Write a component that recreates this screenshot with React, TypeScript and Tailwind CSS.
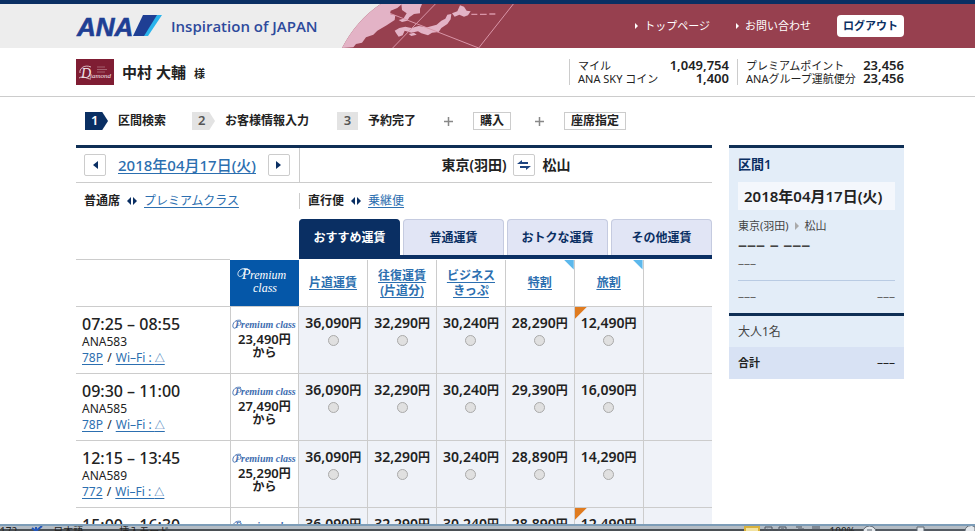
import React from 'react';

const flights = [
  { time: '07:25 – 08:55', no: 'ANA583', craft: '78P', premium: '23,490', fares: ['36,090', '32,290', '30,240', '28,290', '12,490'], flag: true },
  { time: '09:30 – 11:00', no: 'ANA585', craft: '78P', premium: '27,490', fares: ['36,090', '32,290', '30,240', '29,390', '16,090'], flag: false },
  { time: '12:15 – 13:45', no: 'ANA589', craft: '772', premium: '25,290', fares: ['36,090', '32,290', '30,240', '28,890', '14,290'], flag: false },
  { time: '15:00 – 16:30', no: 'ANA591', craft: '772', premium: '25,290', fares: ['36,090', '32,290', '30,240', '28,890', '12,490'], flag: true },
];

const fareTypes: { lines: string[]; corner: boolean }[] = [
  { lines: ['片道運賃'], corner: false },
  { lines: ['往復運賃', '(片道分)'], corner: false },
  { lines: ['ビジネス', 'きっぷ'], corner: false },
  { lines: ['特割'], corner: true },
  { lines: ['旅割'], corner: true },
];

const link = 'text-[#2c6fb0] underline underline-offset-2';

function Logo() {
  return (
    <div className="flex items-center gap-2">
      <svg width="87" height="26" viewBox="0 0 87 26" className="overflow-visible" role="img" aria-label="ANA">
        <g fill="#1f3f94">
          <text x="1" y="23" fontFamily="Liberation Sans, sans-serif" fontSize="26" fontWeight="700" fontStyle="italic" stroke="#1f3f94" strokeWidth="0.6">ANA</text>
          <path d="M67 2H82L69 23H57Z" />
        </g>
        <path d="M81 2H86L72 23H68Z" fill="#2ab4ec" />
      </svg>
      <span className="font-['Open_Sans',sans-serif] text-[15px] font-semibold text-[#2d4a9c]">Inspiration of JAPAN</span>
    </div>
  );
}

function Triangle({ left = false, className = 'h-2 w-[5px]' }: { left?: boolean; className?: string }) {
  return (
    <svg viewBox="0 0 5 8" preserveAspectRatio="none" className={className} aria-hidden="true">
      <path d={left ? 'M5 0V8L0 4Z' : 'M0 0V8L5 4Z'} fill="currentColor" />
    </svg>
  );
}

export default function App() {
  return (
    <div className="flex h-screen flex-col overflow-hidden bg-white font-['Noto_Sans','Noto_Sans_CJK_JP',sans-serif] text-xs text-[#222]">
      <Header />
      <UserBar />
      <div className="min-h-0 flex-1 overflow-hidden pr-[71px] pl-[76px]">
        <Steps />
        <div className="flex items-start gap-[17px]">
          <Main />
          <Summary />
        </div>
      </div>
      <StatusBar />
    </div>
  );
}

function Header() {
  return (
    <header className="flex h-12 shrink-0 border-t-4 border-[#0a2f63] bg-[#ededed]">
      <div className="flex w-[342px] shrink-0 items-center pl-[76px]"><Logo /></div>
      <svg width="178" height="44" viewBox="6 12 534 132" className="shrink-0" aria-hidden="true">
        <path d="M6 144Q50 60 122 12H540V144Z" fill="#97404f" />
        <path d="M6 144Q50 60 122 12H186L172 24 152 32 150 42 166 46 164 60 140 76 112 92 100 104 78 112 66 128 48 132 40 142Z" fill="#e3b3c6" />
        <path d="M184 12H246L240 26 240 40 222 42 208 52 202 62 186 66 176 60 190 56 200 40 186 30Z" fill="#e3b3c6" />
        <path d="M164 92L178 84 196 80 214 84 236 78 262 82 290 74 304 62 316 56 322 44 334 42 332 58 322 72 304 84 296 96 276 98 264 106 244 100 234 94 214 98 194 92 188 106 176 110 170 102Z" fill="#e3b3c6" />
        <path d="M336 40L352 34 360 16 372 20 380 32 392 34 384 46 372 50 358 44 344 50Z" fill="#e3b3c6" />
        <path d="M206 102L222 98 230 104 214 108Z" fill="#e3b3c6" />
        <path d="M150 40L416 144 520 12M158 144L286 12" fill="none" stroke="#d995a8" strokeWidth="3" />
        <path d="M394 43H412M420 43H440M448 42H466" fill="none" stroke="#d995a8" strokeWidth="4" />
      </svg>
      <nav className="flex flex-1 items-center justify-end bg-[#97404f] pr-[71px] text-[11px] text-white">
        <a href="#top" className="mr-[26px] flex items-center gap-1.5"><Triangle className="h-1.5 w-[3px]" />トップページ</a>
        <a href="#contact" className="mr-[26px] flex items-center gap-1.5"><Triangle className="h-1.5 w-[3px]" />お問い合わせ</a>
        <button className="h-[22px] rounded-sm bg-white px-1.5 text-[11px] font-bold text-[#0a2f63]">ログアウト</button>
      </nav>
    </header>
  );
}

function DiamondBadge() {
  return (
    <svg width="38" height="26" viewBox="0 0 38 26" role="img" aria-label="Diamond">
      <path d="M0 0H38V26H0Z" fill="#7f1d33" />
      <path d="M21 8H29M21 10.500H31M21 13H29" stroke="#a5606f" strokeWidth="1" />
      <g fill="#f3e4e8" fontFamily="Liberation Serif, serif" fontStyle="italic">
        <text x="5" y="19" fontSize="14">D</text>
        <text x="14" y="19" fontSize="7">iamond</text>
      </g>
      <path d="M15 8C8 5 3 10 4 14M3 19C8 16 10 20 15 20" fill="none" stroke="#f3e4e8" strokeWidth="0.8" />
    </svg>
  );
}

const points = 'text-right text-[13px] font-semibold';

function UserBar() {
  return (
    <section className="flex h-[49px] shrink-0 items-center border-b border-[#ccc] pr-[71px] pl-[76px]">
      <DiamondBadge />
      <p className="ml-2 flex-1 text-[15px] font-bold">中村 大輔<span className="ml-2 text-[11px]">様</span></p>
      <dl className="grid w-[168px] grid-cols-[auto_auto] justify-between border-l border-[#ccc] px-2 text-[11px] leading-[13px]">
        <dt>マイル</dt><dd className={points}>1,049,754</dd>
        <dt>ANA SKY コイン</dt><dd className={points}>1,400</dd>
      </dl>
      <dl className="grid w-[167px] grid-cols-[auto_auto] justify-between border-l border-[#ccc] pl-2 text-[11px] leading-[13px]">
        <dt>プレミアムポイント</dt><dd className={points}>23,456</dd>
        <dt>ANAグループ運航便分</dt><dd className={points}>23,456</dd>
      </dl>
    </section>
  );
}

function Steps() {
  return (
    <ol className="flex h-12 items-center pl-[9px] text-xs font-semibold">
      <li className="flex items-center gap-2.5"><StepMark n="1" active />区間検索</li>
      <li className="ml-[26px] flex items-center gap-2.5"><StepMark n="2" />お客様情報入力</li>
      <li className="ml-7 flex items-center gap-2.5"><span className="flex h-[18px] w-[21px] items-center justify-center bg-[#e3e3e3] text-[13px] text-[#555]">3</span>予約完了</li>
      <li className="ml-7 flex items-center gap-5"><Plus /><span className="border border-[#ccc] px-1.5 leading-4">購入</span></li>
      <li className="ml-6 flex items-center gap-5"><Plus /><span className="border border-[#ccc] px-1.5 leading-4">座席指定</span></li>
    </ol>
  );
}

function Plus() {
  return <svg width="9" height="9" viewBox="0 0 9 9" aria-hidden="true"><path d="M4.500 0V9M0 4.500H9" stroke="#888" strokeWidth="1.500" /></svg>;
}

function StepMark({ n, active = false }: { n: string; active?: boolean }) {
  return (
    <span className={`flex h-[18px] w-[23px] items-center pl-1.5 text-[13px] [clip-path:polygon(0_0,75%_0,100%_50%,75%_100%,0_100%)] ${active ? 'bg-[#0a2f63] text-white' : 'bg-[#e3e3e3] text-[#555]'}`}>{n}</span>
  );
}

const square = 'flex size-[22px] shrink-0 items-center justify-center rounded-xs border border-[#ccc] text-[#0a2f63]';

function Main() {
  return (
    <main className="min-w-0 flex-1 border-t-3 border-[#0f2f55]">
      <div className="flex h-[35px] border-b border-[#ccc]">
        <div className="flex w-[224px] shrink-0 items-center justify-between border-r border-[#ccc] pr-[9px] pl-2">
          <button className={square} aria-label="前日"><Triangle left /></button>
          <a href="#date" className={`${link} text-[15px] font-medium`}>2018年04月17日(火)</a>
          <button className={square} aria-label="翌日"><Triangle /></button>
        </div>
        <div className="flex flex-1 items-center justify-center gap-1.5 text-sm font-semibold">
          東京(羽田)
          <button className={square} aria-label="出発地と到着地を入れ替え">
            <svg width="14" height="10" viewBox="0 0 14 10" aria-hidden="true"><path d="M0 4L5 0V2H11V4ZM14 6L9 10V8H3V6Z" fill="#1d4480" /></svg>
          </button>
          <span className="ml-0.5">松山</span>
        </div>
      </div>
      <div className="flex h-[36px] items-center">
        <Switch on="普通席" off="プレミアムクラス" className="w-[223px] pl-2" />
        <Switch on="直行便" off="乗継便" className="border-l border-[#ccc] pl-2" />
      </div>
      <div className="ml-[223px] grid grid-cols-4 gap-[3px] border-b-4 border-[#0a2f63] text-xs font-semibold">
        <button className="h-9 rounded-t border border-b-0 border-[#0a2f63] bg-[#0a2f63] text-white">おすすめ運賃</button>
        {['普通運賃', 'おトクな運賃', 'その他運賃'].map((t) => (
          <button key={t} className="h-9 rounded-t border border-b-0 border-[#c5cbe0] bg-[#e1e5f5] text-[#0a2f63]">{t}</button>
        ))}
      </div>
      <FareTable />
    </main>
  );
}

function Switch({ on, off, className }: { on: string; off: string; className: string }) {
  return (
    <p className={`flex items-center gap-[7px] leading-4 ${className}`}>
      <b className="font-semibold">{on}</b>
      <span className="flex gap-0.5 text-[#0a2f63]"><Triangle left className="h-2 w-1" /><Triangle className="h-2 w-1" /></span>
      <a href="#switch" className={link}>{off}</a>
    </p>
  );
}

function FareTable() {
  return (
    <table className="w-full table-fixed border-collapse">
      <thead>
        <tr className="h-[47px] border-b border-[#ccc]">
          <td className="w-[154px] border-t border-[#ccc]" />
          <th className="bg-[#0557a8] p-0"><PremiumHeading /></th>
          {fareTypes.map((f) => (
            <th key={f.lines[0]} className="relative border-r border-[#ccc] p-0 text-xs leading-[15px] font-semibold">
              <a href="#fare" className={link}>{f.lines.map((l) => <span key={l} className="block underline underline-offset-2">{l}</span>)}</a>
              {f.corner && <span className="absolute top-0 right-0 size-2.5 bg-[#5cb8ec] [clip-path:polygon(0_0,100%_0,100%_100%)]" />}
            </th>
          ))}
          <td />
        </tr>
      </thead>
      <tbody>
        {flights.map((d) => (
          <tr key={d.time} className="h-[67px] border-b border-[#ccc] align-top">
            <th scope="row" className="px-1.5 pt-[7px] text-left font-normal">
              <div className="text-base leading-5 font-medium">{d.time}</div>
              <div className="leading-4">{d.no}</div>
              <div className="leading-[15px]"><a href="#craft" className={link}>{d.craft}</a> <span className="mx-px">/</span> <a href="#wifi" className={link}>Wi–Fi : <span className="text-[10px]">△</span></a></div>
            </th>
            <td className="border-x border-[#ccc] p-0 pt-3 text-center text-[13px] leading-[14px] font-semibold">
              <PremiumMark />
              <div className="h-[14px]">{d.premium}<span className="text-xs">円</span></div>
              <div className="text-xs leading-[14px]">から</div>
            </td>
            {d.fares.map((f, i) => (
              <td key={i} className="relative border-r border-[#ccc] bg-[#eff2f8] p-0 pt-[7px] text-center text-sm leading-[18px] font-semibold">
                <label className="flex flex-col items-center gap-[3px]">
                  <span>{f}<span className="text-xs">円</span></span>
                  <input type="radio" name="fare" className="size-[11px] appearance-none rounded-full border border-[#aaa] bg-[#e0e0e0]" />
                </label>
                {d.flag && i === 4 && <span className="absolute top-0 left-0 size-3 bg-[#e07b1f] [clip-path:polygon(0_0,100%_0,0_100%)]" />}
              </td>
            ))}
            <td className="bg-[#eff2f8]" />
          </tr>
        ))}
      </tbody>
    </table>
  );
}

function PremiumHeading() {
  return (
    <svg width="56" height="32" viewBox="0 0 56 32" className="mx-auto" role="img" aria-label="Premium class">
      <g fill="#fff" fontFamily="Liberation Serif, serif" fontStyle="italic" fontWeight="400">
        <text x="6" y="12" fontSize="14">P</text>
        <text x="14" y="12" fontSize="12">remium</text>
        <text x="17" y="25" fontSize="12">class</text>
      </g>
      <path d="M12 2C6 0 1 4 2 8C3 11 8 9 8 5" fill="none" stroke="#fff" strokeWidth="0.8" />
    </svg>
  );
}

function PremiumMark() {
  return (
    <svg width="64" height="13" viewBox="0 0 64 13" className="mx-auto" role="img" aria-label="Premium class">
      <g fill="#3d6db0" fontFamily="Liberation Serif, serif" fontStyle="italic" fontWeight="700">
        <text x="3" y="9" fontSize="11" fontWeight="400">P</text>
        <text x="9" y="9" fontSize="10">remium class</text>
      </g>
      <path d="M9 1.500C4 0 0 4 1 8C2 11 6 8 6 4" fill="none" stroke="#3d6db0" strokeWidth="0.900" />
    </svg>
  );
}

function Summary() {
  return (
    <aside className="w-[175px] shrink-0 border-t-3 border-[#0f2f55] bg-[#e3edf8]">
      <div className="px-[9px]">
        <h2 className="pt-1.5 text-[13px] leading-5 font-semibold text-[#0a2f63]">区間1</h2>
        <p className="mt-2 bg-[#f4f7fc] pl-1.5 text-[15px] leading-7 font-semibold">2018年04月17日(火)</p>
        <p className="mt-2 flex items-center gap-1.5 text-[11px] leading-4 text-[#444]">東京(羽田) <Triangle className="h-2 w-1 text-[#aaa]" /> 松山</p>
        <p className="mt-0.5 text-lg leading-4 font-medium text-[#444]">––– – –––</p>
        <p className="mt-1 leading-4 text-[#666]">–––</p>
        <p className="mt-2 flex justify-between border-t border-[#b9cbe3] py-2 leading-4 text-[#666]"><span>–––</span><span>–––</span></p>
      </div>
      <p className="border-t-3 border-[#0f2f55] px-[9px] leading-[31px] text-[#444]">大人1名</p>
      <p className="flex justify-between bg-[#d8e2f4] px-[9px] leading-8"><b className="text-[11px]">合計</b><span>–––</span></p>
    </aside>
  );
}

function StatusBar() {
  return (
    <footer className="flex h-[7px] shrink-0 items-start overflow-hidden border-t-2 border-[#7d9db8] bg-linear-to-b from-[#b4bcc4] from-60% to-[#4a4f54] to-60% text-[10px] leading-[10px] whitespace-nowrap text-[#222]">
      <span>172</span>
      <svg width="12" height="8" viewBox="0 0 12 8" className="ml-3.5 shrink-0" aria-hidden="true"><path d="M1 2L5 5 11 0M5 1V5" fill="none" stroke="#2456b8" strokeWidth="2" /></svg>
      <span className="ml-2.5">日本語</span>
      <span className="ml-9">挿入モード</span>
      <span className="ml-auto h-2 w-4 shrink-0 border-2 border-[#d9b23c] bg-[#f3e3a0]" />
      <svg width="60" height="6" viewBox="0 0 60 6" className="ml-1 shrink-0" aria-hidden="true">
        <path d="M1 6V1H8V6M3 3L6 5M15 6V1H22V6M17 3H20M32 1H38M34 3H40M48 1H56M48 3H56" fill="none" stroke="#4c5560" />
      </svg>
      <span className="ml-1.5">100%</span>
      <svg width="112" height="6" viewBox="0 0 112 6" className="ml-2 shrink-0" aria-hidden="true">
        <path d="M0 6A6.500 6 0 0 1 13 6ZM102 6A6 6 0 0 1 112 1V6ZM54 1H61V6H54Z" fill="#e4e8ec" stroke="#5d6670" />
        <path d="M4 4H9M14 4H54M61 4H102" stroke="#5d6670" />
      </svg>
    </footer>
  );
}
